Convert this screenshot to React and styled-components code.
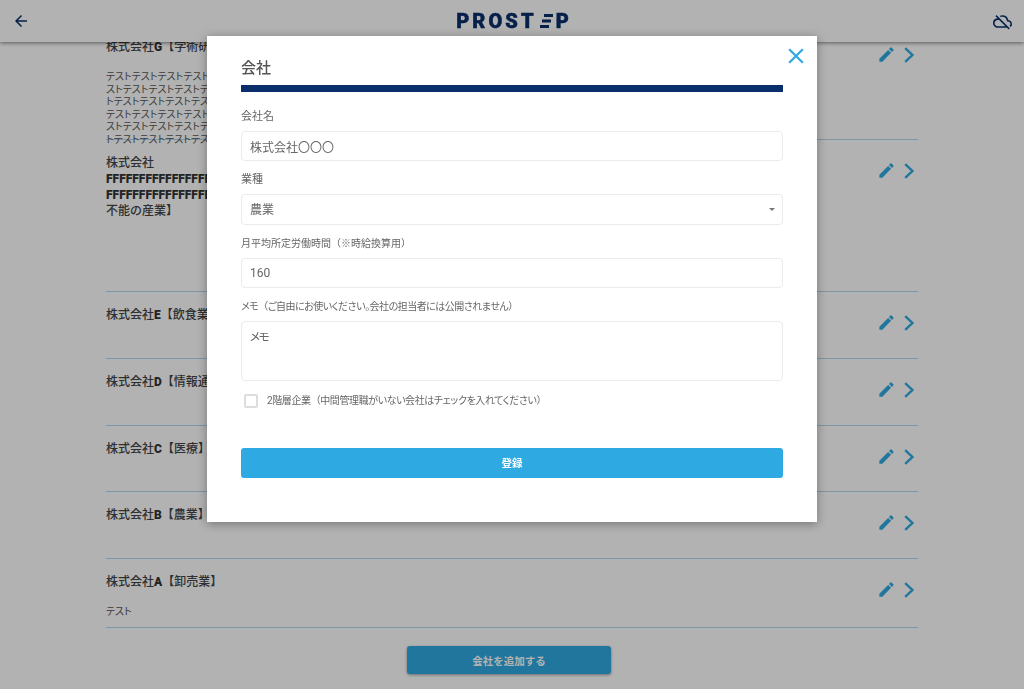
import styled, { createGlobalStyle } from "styled-components";
import { MdArrowBack, MdClose, MdEdit, MdOutlineCloudOff } from "react-icons/md";

const FONT = `Roboto, "Noto Sans CJK JP", sans-serif`;

const GlobalStyle = createGlobalStyle`
  html, body {
    margin: 0;
    height: 100%;
    background: #fff;
    overflow: hidden;
    font-family: ${FONT};
    font-feature-settings: "palt";
    color: #555;
  }
`;

const Header = styled.header`
  position: fixed;
  top: 0;
  left: 0;
  right: 0;
  height: 42px;
  display: flex;
  align-items: center;
  justify-content: space-between;
  padding: 0 12px;
  background: #fff;
  box-shadow: 0 1px 4px rgba(0, 0, 0, 0.5);
  color: #0a2f6b;
`;

const Logo = styled.div`
  display: flex;
  align-items: center;
  gap: 3px;
  margin-left: 5px;
  font-size: 20px;
  font-weight: 900;
  letter-spacing: 3.1px;
  -webkit-text-stroke: 0.5px #0a2f6b;
  color: #0a2f6b;
  line-height: 20px;
`;

const Main = styled.main`
  width: 812px;
  margin: 0 auto;
  padding-top: 24px;
`;

const Row = styled.section`
  display: flex;
  justify-content: space-between;
  box-sizing: border-box;
  height: ${(props) => props.height}px;
  padding-top: 15px;
  border-bottom: 1px solid #b4d8f2;
`;

const RowBody = styled.div`
  width: 134px;
`;

const RowTitle = styled.h3`
  margin: 0;
  font-size: 12px;
  line-height: 16px;
  font-weight: 500;
  color: #444;
  white-space: pre;
  font-feature-settings: normal;
`;

const LatinMark = styled.span`
  font-weight: 900;
  color: #333;
`;

const RowNote = styled.p`
  margin: 16px 0 0;
  font-size: 10px;
  line-height: 12.5px;
  color: #555;
  white-space: pre;
`;

const RowActions = styled.div`
  display: flex;
  align-items: center;
  gap: 7px;
  height: 31px;
  margin-right: 3.5px;
  color: #2ea9e1;
`;

const AddRow = styled.div`
  display: flex;
  justify-content: center;
  padding: 18px 6px 0 0;
`;

const AddButton = styled.button`
  width: 204px;
  height: 28px;
  border: 0;
  border-radius: 3px;
  background: #2ea9e1;
  color: #fff;
  font: 700 10.5px ${FONT};
  box-shadow: 0 1px 3px rgba(0, 0, 0, 0.4);
`;

const Overlay = styled.div`
  position: fixed;
  inset: 0;
  background: rgba(0, 0, 0, 0.3);
`;

const Modal = styled.div`
  position: fixed;
  top: 36px;
  left: 207px;
  width: 610px;
  height: 486px;
  box-sizing: border-box;
  padding: 22px 34px 0;
  background: #fff;
  box-shadow: 0 2px 10px rgba(0, 0, 0, 0.35);
`;

const CloseButton = styled.button`
  position: absolute;
  top: 6px;
  right: 7px;
  padding: 0;
  width: 28px;
  height: 28px;
  display: flex;
  align-items: center;
  justify-content: center;
  border: 0;
  background: none;
  color: #2ea9e1;
`;

const ModalTitle = styled.h2`
  margin: 0;
  font-size: 15px;
  line-height: 20px;
  font-weight: 500;
  color: #555;
`;

const TitleBar = styled.div`
  height: 7px;
  margin-top: 7px;
  background: #0a2f6b;
`;

const Form = styled.form`
  display: flex;
  flex-direction: column;
  margin: 0;
`;

const Label = styled.label`
  display: block;
  margin-top: ${(props) => props.top || 11}px;
  margin-bottom: 6px;
  font-size: ${(props) => props.size || 11}px;
  line-height: 16px;
  letter-spacing: ${(props) => props.spacing || 0}px;
  color: #666;
`;

const Paren = styled.span`
  font-feature-settings: normal;
`;

const fieldStyles = `
  display: block;
  width: 100%;
  box-sizing: border-box;
  border: 1px solid #ebebeb;
  border-radius: 4px;
  background: #fff;
  padding: 0 8px;
  font: 12px ${FONT};
  font-feature-settings: "palt";
  color: #666;
  outline: none;
`;

const TextInput = styled.input`
  ${fieldStyles}
  height: 30.5px;
`;

const SelectWrap = styled.div`
  position: relative;
  &::after {
    content: "";
    position: absolute;
    right: 8px;
    top: 14px;
    border-style: solid;
    border-width: 3px 3px 0;
    border-color: #777 transparent transparent;
  }
`;

const Select = styled.select`
  ${fieldStyles}
  height: 30.5px;
  appearance: none;
`;

const TextArea = styled.textarea`
  ${fieldStyles}
  height: 59.5px;
  padding-top: 6px;
  letter-spacing: -1.5px;
  font-size: 11.5px;
  resize: none;
`;

const CheckRow = styled.label`
  display: flex;
  align-items: center;
  gap: 9px;
  margin: 12px 0 0 3px;
  font-size: 10px;
  line-height: 16px;
  letter-spacing: -0.4px;
  color: #666;
`;

const CheckBox = styled.input`
  appearance: none;
  margin: 0;
  width: 14px;
  height: 14px;
  border: 2px solid #ddd;
  border-radius: 2px;
  background: #fff;
`;

const SubmitButton = styled.button`
  height: 30px;
  margin-top: 39px;
  border: 0;
  border-radius: 3px;
  background: #2ea9e1;
  color: #fff;
  font: 700 10.5px ${FONT};
`;

const longNote = [
  "テストテストテストテストテストテスト",
  "ストテストテストテストテストテスト",
  "トテストテストテストテストテスト",
].join("\n");

const companies = [
  { title: "株式会社G【学術研】", note: `${longNote}\n${longNote}`, height: 116 },
  { title: "株式会社\nFFFFFFFFFFFFFFFFF\nFFFFFFFFFFFFFFFFF\n不能の産業】", height: 152 },
  { title: "株式会社E【飲食業】", height: 67 },
  { title: "株式会社D【情報通信】", height: 67 },
  { title: "株式会社C【医療】", height: 66 },
  { title: "株式会社B【農業】", height: 67 },
  { title: "株式会社A【卸売業】", note: "テスト", height: 69 },
];

const markLatin = (title) =>
  title
    .split(/([A-Z]+)/)
    .map((part, i) => (i % 2 ? <LatinMark key={i}>{part}</LatinMark> : part));

const LogoBars = () => (
  <svg width="13" height="14" viewBox="0 0 13 14" fill="currentColor">
    <rect x="4" y="0" width="9" height="3" />
    <rect x="2" y="5.5" width="9" height="3" />
    <rect x="0" y="11" width="9" height="3" />
  </svg>
);

const Chevron = () => (
  <svg width="12" height="16" viewBox="0 0 12 16" fill="none" stroke="currentColor" strokeWidth="2.4">
    <polyline points="2.2,1.2 9.4,8 2.2,14.8" />
  </svg>
);

export default function App() {
  return (
    <>
      <GlobalStyle />
      <Main>
        {companies.map((company) => (
          <Row key={company.title} height={company.height}>
            <RowBody>
              <RowTitle>{markLatin(company.title)}</RowTitle>
              {company.note && <RowNote>{company.note}</RowNote>}
            </RowBody>
            <RowActions>
              <MdEdit size={19} />
              <Chevron />
            </RowActions>
          </Row>
        ))}
        <AddRow>
          <AddButton>会社を追加する</AddButton>
        </AddRow>
      </Main>
      <Header>
        <MdArrowBack size={18} />
        <Logo>
          PROST
          <LogoBars />
          P
        </Logo>
        <MdOutlineCloudOff size={19} />
      </Header>
      <Overlay />
      <Modal>
        <CloseButton type="button">
          <MdClose size={26} />
        </CloseButton>
        <ModalTitle>会社</ModalTitle>
        <TitleBar />
        <Form>
          <Label top={16.75}>会社名</Label>
          <TextInput defaultValue="株式会社〇〇〇" />
          <Label>業種</Label>
          <SelectWrap>
            <Select defaultValue="農業">
              <option>農業</option>
            </Select>
          </SelectWrap>
          <Label size={10}>
            月平均所定労働時間<Paren>（</Paren>※時給換算用<Paren>）</Paren>
          </Label>
          <TextInput defaultValue="160" />
          <Label size={10} spacing={-0.5}>
            メモ<Paren>（</Paren>ご自由にお使いください。会社の担当者には公開されません<Paren>）</Paren>
          </Label>
          <TextArea defaultValue="メモ" />
          <CheckRow>
            <CheckBox type="checkbox" />
            <span>
              2階層企業<Paren>（</Paren>中間管理職がいない会社はチェックを入れてください<Paren>）</Paren>
            </span>
          </CheckRow>
          <SubmitButton type="button">登録</SubmitButton>
        </Form>
      </Modal>
    </>
  );
}
